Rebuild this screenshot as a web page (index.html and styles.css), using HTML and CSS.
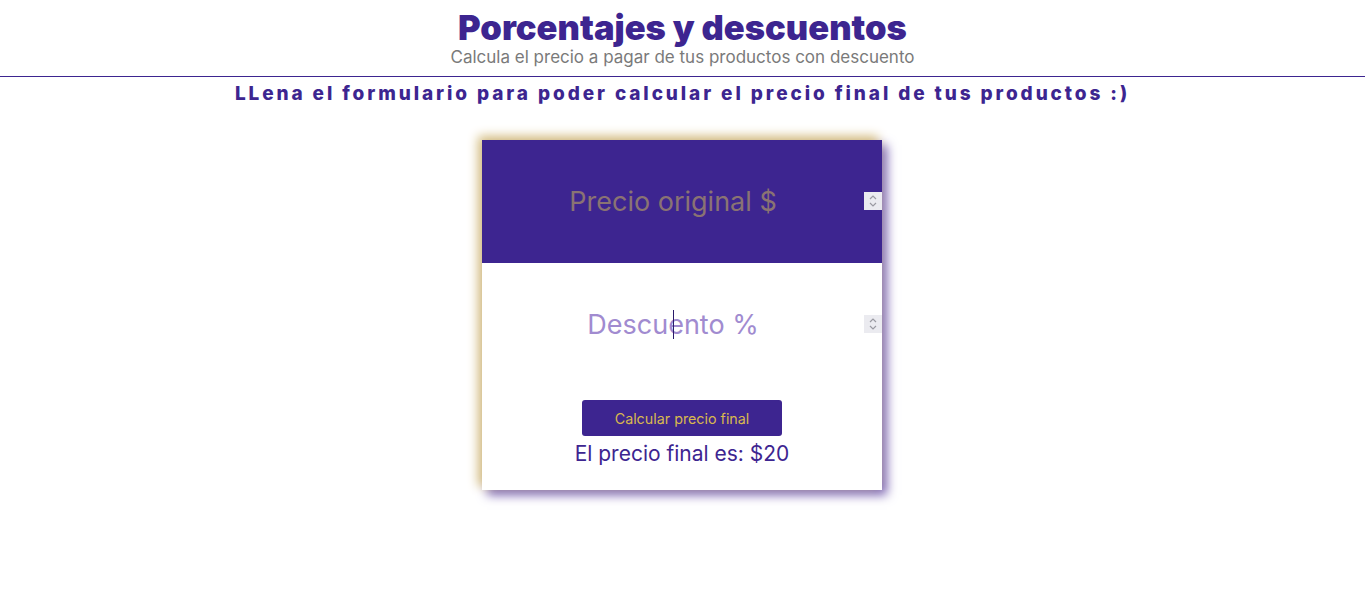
FILE: index.html
```html
<!DOCTYPE html>
<html lang="es">
<head>
<meta charset="utf-8">
<title>Porcentajes y descuentos</title>
<link rel="stylesheet" href="styles.css">
</head>
<body>
<header class="header">
  <h1 class="title">Porcentajes y descuentos</h1>
  <p class="subtitle">Calcula el precio a pagar de tus productos con descuento</p>
</header>
<h3 class="lead">LLena el formulario para poder calcular el precio final de tus productos :)</h3>
<main class="main">
  <form class="card">
    <div class="field-wrap field-wrap-price">
      <input class="field field-price" type="number" placeholder="Precio original $">
      <span class="spin" aria-hidden="true">
        <svg width="10" height="14" viewBox="0 0 10 14"><path d="M2 5 L5 2 L8 5 M2 9 L5 12 L8 9" fill="none" stroke="#9a9aa2" stroke-width="1.2"/></svg>
      </span>
    </div>
    <div class="field-wrap">
      <input class="field field-discount" type="number" placeholder="Descuento %">
      <span class="caret" aria-hidden="true"></span>
      <span class="spin" aria-hidden="true">
        <svg width="10" height="14" viewBox="0 0 10 14"><path d="M2 5 L5 2 L8 5 M2 9 L5 12 L8 9" fill="none" stroke="#9a9aa2" stroke-width="1.2"/></svg>
      </span>
    </div>
    <div class="actions">
      <button class="btn" type="button">Calcular precio final</button>
      <p class="result">El precio final es: $20</p>
    </div>
  </form>
</main>
</body>
</html>
```
FILE: styles.css
```css
* { box-sizing: border-box; }
body {
  margin: 0;
  font-family: Inter, "Open Sans", sans-serif;
  background: #fff;
}
.header {
  text-align: center;
  padding-top: 7px;
  height: 77px;
  border-bottom: 1px solid #3d2590;
}
.title {
  margin: 0;
  font-size: 34.5px;
  line-height: 41px;
  font-weight: 900;
  color: #3d2590;
}
.subtitle {
  margin: 0;
  font-size: 17px;
  line-height: 18px;
  color: #7a7a7a;
}
.lead {
  margin: 5px 0 0;
  text-align: center;
  font-size: 19px;
  line-height: 24px;
  font-weight: 800;
  letter-spacing: 2.9px;
  color: #3d2590;
}
.main {
  display: flex;
  justify-content: center;
  padding: 34px 1px 60px 0;
}
.card {
  width: 400px;
  height: 350px;
  background: #fff;
  display: flex;
  flex-direction: column;
  box-shadow: -4px -4px 10px #d6bf80, 5px 5px 10px #7a64b4;
}
.field-wrap {
  position: relative;
  height: 123px;
}
.field-wrap-price { background: #3d2590; }
.field {
  display: block;
  width: 100%;
  height: 100%;
  border: none;
  outline: none;
  margin: 0;
  padding: 0 18px 0 0;
  text-align: center;
  font-family: inherit;
  font-size: 27px;
  background: transparent;
  -moz-appearance: textfield;
}
.field::-webkit-inner-spin-button,
.field::-webkit-outer-spin-button {
  -webkit-appearance: none;
  margin: 0;
}
.field-price { color: #fff; }
.field-price::placeholder { color: #8a7373; }
.field-discount { color: #3d2590; }
.field-discount::placeholder { color: #a18bd0; }
.spin {
  position: absolute;
  right: 0;
  top: 52px;
  width: 18px;
  height: 18px;
  background: #ebebf0;
  display: flex;
  align-items: center;
  justify-content: center;
}
.caret {
  position: absolute;
  left: 191px;
  top: 47px;
  width: 1px;
  height: 29px;
  background: #2a1a6a;
}
.actions {
  display: flex;
  flex-direction: column;
  align-items: center;
  padding-top: 14px;
}
.btn {
  width: 200px;
  height: 36px;
  border: none;
  border-radius: 3px;
  background: #3d2590;
  color: #d8b84e;
  font-family: inherit;
  font-size: 14.3px;
}
.result {
  margin: 5px 0 0;
  font-size: 21px;
  line-height: 26px;
  color: #3d2590;
}
```
